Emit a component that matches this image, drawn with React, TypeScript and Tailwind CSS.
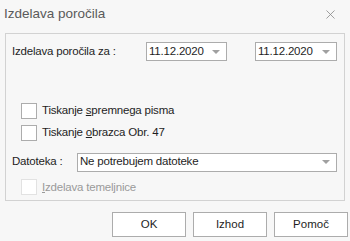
import { X } from 'lucide-react';
import type { ReactNode } from 'react';

const font = { fontFamily: '"Liberation Sans", Arial, sans-serif' };

function Caret() {
  return <span className="ml-auto mr-[6px] h-0 w-0 shrink-0 border-x-[4px] border-t-[4px] border-x-transparent border-t-[#a0a0a0]" />;
}

function Combo({ value, className }: { value: string; className: string }) {
  return (
    <div className={`flex h-[19px] items-center whitespace-nowrap border border-[#acacac] bg-white pl-[2px] text-[11.5px] tracking-[-0.2px] text-[#1e1e1e] ${className}`}>
      <span>{value}</span>
      <Caret />
    </div>
  );
}

function Check({ children, disabled }: { children: ReactNode; disabled?: boolean }) {
  return (
    <div className="flex items-center gap-[5px]">
      <span className={`h-[16px] w-[16px] border bg-white ${disabled ? 'border-[#e2e2e2]' : 'border-[#acacac]'}`} />
      <span className={`text-[11.5px] tracking-[-0.2px] ${disabled ? 'text-[#9a9a9a]' : 'text-[#1e1e1e]'}`}>{children}</span>
    </div>
  );
}

function Btn({ label }: { label: string }) {
  return (
    <button className="flex h-[25px] w-[74px] items-center justify-center border border-[#acacac] bg-white text-[11.5px] text-[#1e1e1e]">
      {label}
    </button>
  );
}

export default function App() {
  return (
    <div className="flex h-[241px] w-[350px] flex-col bg-[#f7f7f7]" style={font}>
      <header className="flex h-[29px] items-center justify-between pl-[4px] pr-[12px]">
        <span className="text-[13.5px] text-[#5a5a5a]">Izdelava poročila</span>
        <X className="h-[15px] w-[15px] text-[#8a8a8a]" strokeWidth={1.3} aria-hidden="true" />
      </header>
      <section className="mx-[5px] mt-[4px] flex h-[168px] flex-col border border-[#d2d2d2] pl-[6px] pr-[7px]">
        <div className="mt-[8px] flex items-center">
          <span className="w-[134px] text-[11.5px] tracking-[-0.2px] text-[#1e1e1e]">Izdelava poročila za :</span>
          <Combo value="11.12.2020" className="w-[81px]" />
          <Combo value="11.12.2020" className="ml-auto w-[82px]" />
        </div>
        <div className="mt-[41px] flex flex-col gap-[5px] pl-[9px]">
          <Check>
            Tiskanje <span className="underline">s</span>premnega pisma
          </Check>
          <Check>
            Tiskanje <span className="underline">o</span>brazca Obr. 47
          </Check>
        </div>
        <div className="mt-[11px] flex items-center">
          <span className="w-[65px] text-[11.5px] tracking-[-0.2px] text-[#1e1e1e]">Datoteka :</span>
          <Combo value="Ne potrebujem datoteke" className="h-[18px] flex-1" />
        </div>
        <div className="mt-[7px] pl-[9px]">
          <Check disabled>
            <span className="underline">I</span>zdelava temeljnice
          </Check>
        </div>
      </section>
      <footer className="mt-[11px] flex justify-end gap-[7px] pr-[2px]">
        <Btn label="OK" />
        <Btn label="Izhod" />
        <Btn label="Pomoč" />
      </footer>
    </div>
  );
}
